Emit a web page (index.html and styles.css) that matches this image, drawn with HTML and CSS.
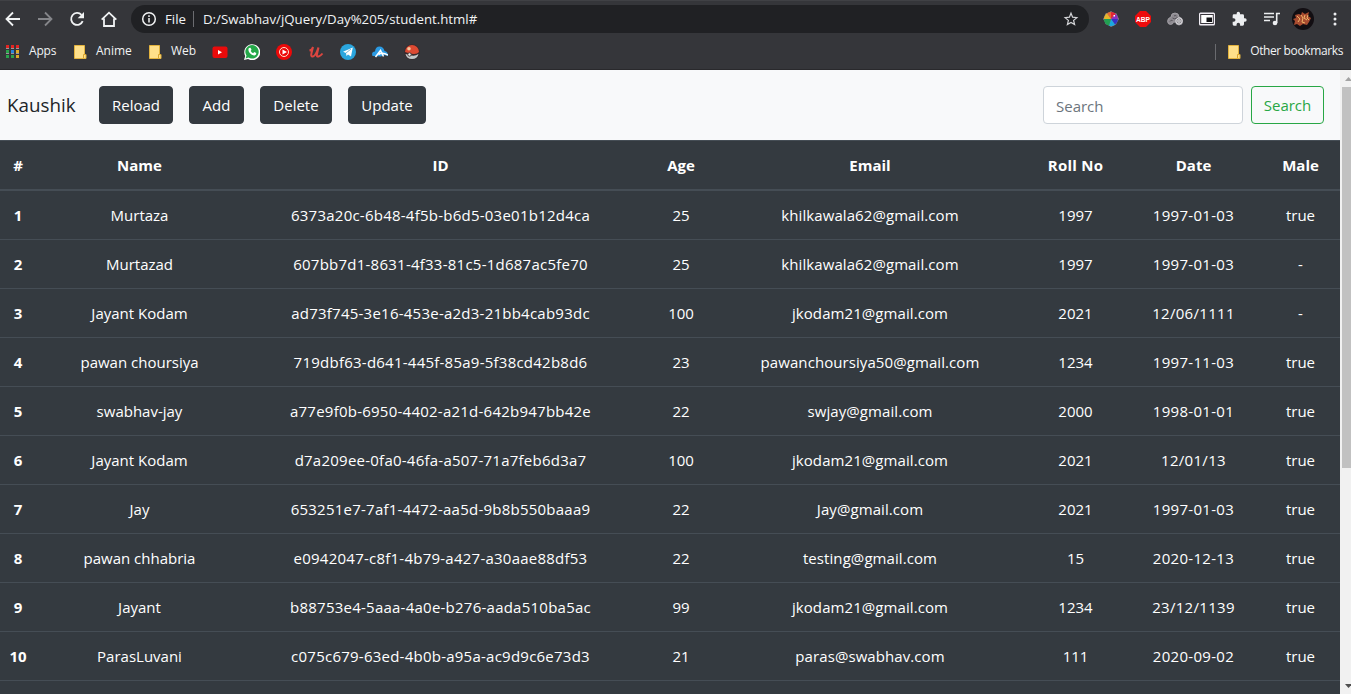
FILE: index.html
```html
<!DOCTYPE html>
<html lang="en">
<head>
<meta charset="utf-8">
<title>Students</title>
<link rel="stylesheet" href="styles.css">
</head>
<body>
<div class="chrome">
  <div class="toolbar">
    <div class="nav-icons">
      <svg width="16" height="16" viewBox="0 0 16 16" class="line"><path d="M15 8H2M8 1.500L1.500 8L8 14.500"/></svg>
      <svg width="16" height="16" viewBox="0 0 16 16" class="line dim"><path d="M1 8h13M8 1.500L14.500 8L8 14.500"/></svg>
      <svg width="16" height="16" viewBox="0 0 16 16" class="line"><path d="M13.700 10.200A6 6 0 1 1 12.500 3.800"/><path class="solid" d="M15 1v6.300H8.700z"/></svg>
      <svg width="16" height="16" viewBox="0 0 16 16" class="line"><path d="M.7 8.700L8 1.700l7.300 7M3 7.500V15h10V7.500"/></svg>
    </div>
    <div class="address">
      <svg class="info" width="16" height="16" viewBox="0 0 16 16"><circle cx="8" cy="8" r="6.300"/><path d="M8 7v4.500M8 4.300v1.600"/></svg>
      <span class="scheme">File</span>
      <span class="bar"></span>
      <span class="url">D:/Swabhav/jQuery/Day%205/student.html#</span>
      <svg class="star" width="16" height="16" viewBox="0 0 16 16"><path d="M8 2.200l1.600 4 4.300.4-3.300 2.800 1 4.200L8 11.400l-3.600 2.200 1-4.200-3.300-2.800 4.300-.4z"/></svg>
    </div>
    <div class="extensions">
      <svg width="16" height="16" viewBox="0 0 16 16"><path fill="#85838a" d="M8 0l2 1.500 3.500 1L15 6l1 2-1.500 2.500L13 13.500 10 15l-2 1-2-1.500L2.500 13 1.500 10 0 8l1.500-2.500L2.500 2.500 6 1.500z"/><path fill="#e32636" d="M8 8V1a7 7 0 0 1 5 2z"/><path fill="#8d2fc0" d="M8 8l5-5a7 7 0 0 1 2 5z"/><path fill="#3532c4" d="M8 8h7a7 7 0 0 1-3 5.700z"/><path fill="#19a9e0" d="M8 8l4 5.700a7 7 0 0 1-6 1.100z"/><path fill="#22a052" d="M8 8l-2 6.800A7 7 0 0 1 1 8z"/><path fill="#e7b52c" d="M8 8H1a7 7 0 0 1 3-5.700z"/><path fill="#e66a30" d="M8 8L4 2.300A7 7 0 0 1 8 1z"/><path fill="#fff" d="M10.500 4h1.500v1.500h-1.500z"/></svg>
      <svg class="blocker" width="16" height="16" viewBox="0 0 16 16"><path fill="#ed0c0c" d="M5 0h6l5 5v6l-5 5H5l-5-5V5z"/><text x="1" y="11" class="abp" textLength="14" lengthAdjust="spacingAndGlyphs">ABP</text></svg>
      <svg width="16" height="16" viewBox="0 0 16 16"><path fill="#8e8b91" stroke="#aaa7ad" stroke-width=".8" d="M4 6Q4 2 8 2t4 4q4 1 3.700 4.500T12 14q-3 0-3.500-3-1 .5-2 0Q6 13.500 3.500 13.500T.5 10.500Q.5 7 4 6z"/><circle cx="12" cy="10" r="3.200" fill="none" stroke="#e0dfe2"/><circle cx="12" cy="10" r="1.300" fill="none" stroke="#e0dfe2" stroke-width=".8"/><path fill="none" stroke="#56535a" d="M5.500 7q2 2 5-.5M3 10.500q1-2 2.500-1M7 5q1-1 2.500 0"/></svg>
      <svg width="16" height="16" viewBox="0 0 16 16"><rect y="1.500" width="16" height="13" rx="1.500" fill="#f2eef5"/><rect x="1.700" y="3.500" width="12.600" height="9" fill="#fff" stroke="#37343b" stroke-width="1"/><path fill="#151518" d="M7.500 6.500h5.500v4.500H7.500z"/></svg>
      <svg width="16" height="16" viewBox="0 0 24 24"><path fill="#eceef0" d="M21 11h-1.500V7a2 2 0 0 0-2-2h-4V3.500a2.500 2.500 0 0 0-5 0V5h-4a2 2 0 0 0-2 2v3.800H4a2.700 2.700 0 0 1 0 5.400H2.500V20a2 2 0 0 0 2 2h3.800v-1.500a2.700 2.700 0 0 1 5.400 0V22h3.800a2 2 0 0 0 2-2v-4H21a2.500 2.500 0 0 0 0-5z"/></svg>
      <svg width="18" height="16" viewBox="0 0 18 16"><path class="notes" d="M1 2.500h10M1 6h10M1 9.500h6M17 2.500h-3.300V12"/><circle cx="12" cy="12" r="2.300" fill="#eceef0"/></svg>
      <svg class="avatar" width="22" height="22" viewBox="0 0 22 22"><circle cx="11" cy="11" r="11" fill="#120e12"/><path fill="#a84c30" d="M3 7l4-1 2 1 1-3 3 2 4-2-1 4 3 2-2 4-2 3-4-1-3 2-3-2-3 1 1-4-2-2 3-1z"/><path fill="none" stroke="#efb568" d="M5 8l3 3-2 3M9 7l2 3-1 4 3 1M13 7l-1 3 3 2M16 7l-1 3 2 2"/></svg>
      <svg class="more" width="4" height="16" viewBox="0 0 4 16" fill="#eceef0"><circle cx="2" cy="3" r="1.500"/><circle cx="2" cy="8" r="1.500"/><circle cx="2" cy="13" r="1.500"/></svg>
    </div>
  </div>
  <div class="bookmarks">
    <svg class="apps" width="13" height="14" viewBox="0 0 13 14"><path fill="#e32422" d="M0 0h3v3H0zM5 0h3v3H5zM10 0h3v3h-3z"/><path fill="#2ba24c" d="M0 5h3v3H0zM0 10h3v3H0zM5 10h3v3H5z"/><path fill="#2684dc" d="M5 5h3v3H5z"/><path fill="#dcac28" d="M10 5h3v3h-3zM10 10h3v3h-3z"/><path fill="#999" d="M0 3h3v1H0zM5 3h3v1H5zM10 3h3v1h-3zM0 8h3v1H0zM5 8h3v1H5zM10 8h3v1h-3z"/></svg>
    <span class="label apps-label">Apps</span>
    <svg class="folder" width="13" height="14" viewBox="0 0 13 14"><path fill="#ffe08a" stroke="#e3b33e" d="M.5.5h10v9h1.500v4H.5z"/><path fill="none" stroke="#d9a52f" d="M9.500 13v-3.500H12"/></svg>
    <span class="label anime">Anime</span>
    <svg class="folder" width="13" height="14" viewBox="0 0 13 14"><path fill="#ffe08a" stroke="#e3b33e" d="M.5.5h10v9h1.500v4H.5z"/><path fill="none" stroke="#d9a52f" d="M9.500 13v-3.500H12"/></svg>
    <span class="label web">Web</span>
    <div class="sites">
      <svg width="16" height="16" viewBox="0 0 16 16"><rect x=".5" y="2.500" width="15" height="11.500" rx="2" fill="#e90b0b"/><path fill="#fff" d="M6 6l4 2.200-4 2.300z"/></svg>
      <svg width="16" height="16" viewBox="0 0 16 16"><path fill="#fff" d="M0 16l1.200-4A8 8 0 1 1 4 15z"/><path fill="#25a849" d="M1.600 14.400l.9-2.800a6.700 6.700 0 1 1 2 1.900z"/><path fill="#fff" d="M5 4l1.500-.3 1 2-.8 1.200q1 1.700 2.500 2.300l1-1.200 2 1q.3 2-1.700 2.400Q8 11.700 5.700 9 3.500 6 5 4z"/></svg>
      <svg width="16" height="16" viewBox="0 0 16 16"><circle cx="8" cy="8" r="8" fill="#ed0909"/><circle cx="8" cy="8" r="4.500" fill="none" stroke="#ffe6d0"/><path fill="#fff" d="M6.500 5.500L11 8l-4.500 2.500z"/></svg>
      <svg width="16" height="16" viewBox="0 0 16 16"><path fill="none" stroke="#dc4640" stroke-width="2" d="M1.500 6.500Q4 6 5 3L3.500 9Q2.500 13 5 12.500 7.500 12 10.500 3.500L9 10q-.7 3 1.600 2.500Q12.500 12 14.500 9.500"/></svg>
      <svg width="16" height="16" viewBox="0 0 16 16"><circle cx="8" cy="8" r="8" fill="#2ba6de"/><path fill="#fff" d="M3 7.700L12.800 3.500 11 12.500 8 10.500 6.500 12 6 9z"/><path stroke="#7ab9d5" d="M6 9l5-4"/></svg>
      <svg width="16" height="16" viewBox="0 0 16 16"><path fill="#2b9be4" d="M.5 12Q-1 8 3 7.500 3.500 2.500 7.500 2.500T12.500 7Q16 7.500 16 12L12 11 9 12.500z"/><path fill="none" stroke="#fff" stroke-width="1.500" d="M3.500 13L8.500 6.500l3 6M6.500 10.500q4-2.500 9.500.5"/></svg>
      <svg width="16" height="16" viewBox="0 0 16 16"><circle cx="8" cy="8" r="7.800" fill="#39292b"/><path fill="#dd4a32" d="M1 8a7 7 0 0 1 14 0q-2 2.500-6 2T1 8z"/><path fill="#c3c8c8" d="M1.500 10l4 1q5 2 9-1-1 5-6.500 5t-6.500-5z"/><circle cx="5" cy="4.800" r="1.800" fill="#f7c79c"/><circle cx="5.500" cy="10.500" r="1.700" fill="#eee" stroke="#4a3d3c"/></svg>
    </div>
    <div class="other">
      <svg class="folder" width="13" height="14" viewBox="0 0 13 14"><path fill="#ffe08a" stroke="#e3b33e" d="M.5.5h10v9h1.500v4H.5z"/><path fill="none" stroke="#d9a52f" d="M9.500 13v-3.500H12"/></svg>
      <span class="label">Other bookmarks</span>
    </div>
  </div>
</div>
<div class="viewport">
  <main class="page">
    <nav class="navbar">
      <span class="brand">Kaushik</span>
      <button class="btn reload">Reload</button>
      <button class="btn add">Add</button>
      <button class="btn delete">Delete</button>
      <button class="btn update">Update</button>
      <input class="search" placeholder="Search">
      <button class="btn outline">Search</button>
    </nav>
    <table class="students">
      <colgroup><col class="c-num"><col class="c-name"><col class="c-id"><col class="c-age"><col class="c-email"><col class="c-roll"><col class="c-date"><col class="c-male"></colgroup>
      <thead><tr><th>#</th><th>Name</th><th>ID</th><th>Age</th><th>Email</th><th>Roll No</th><th>Date</th><th>Male</th></tr></thead>
      <tbody>
        <tr><th>1</th><td>Murtaza</td><td>6373a20c-6b48-4f5b-b6d5-03e01b12d4ca</td><td>25</td><td>khilkawala62@gmail.com</td><td>1997</td><td>1997-01-03</td><td>true</td></tr>
        <tr><th>2</th><td>Murtazad</td><td>607bb7d1-8631-4f33-81c5-1d687ac5fe70</td><td>25</td><td>khilkawala62@gmail.com</td><td>1997</td><td>1997-01-03</td><td>-</td></tr>
        <tr><th>3</th><td>Jayant Kodam</td><td>ad73f745-3e16-453e-a2d3-21bb4cab93dc</td><td>100</td><td>jkodam21@gmail.com</td><td>2021</td><td>12/06/1111</td><td>-</td></tr>
        <tr><th>4</th><td>pawan choursiya</td><td>719dbf63-d641-445f-85a9-5f38cd42b8d6</td><td>23</td><td>pawanchoursiya50@gmail.com</td><td>1234</td><td>1997-11-03</td><td>true</td></tr>
        <tr><th>5</th><td>swabhav-jay</td><td>a77e9f0b-6950-4402-a21d-642b947bb42e</td><td>22</td><td>swjay@gmail.com</td><td>2000</td><td>1998-01-01</td><td>true</td></tr>
        <tr><th>6</th><td>Jayant Kodam</td><td>d7a209ee-0fa0-46fa-a507-71a7feb6d3a7</td><td>100</td><td>jkodam21@gmail.com</td><td>2021</td><td>12/01/13</td><td>true</td></tr>
        <tr><th>7</th><td>Jay</td><td>653251e7-7af1-4472-aa5d-9b8b550baaa9</td><td>22</td><td>Jay@gmail.com</td><td>2021</td><td>1997-01-03</td><td>true</td></tr>
        <tr><th>8</th><td>pawan chhabria</td><td>e0942047-c8f1-4b79-a427-a30aae88df53</td><td>22</td><td>testing@gmail.com</td><td>15</td><td>2020-12-13</td><td>true</td></tr>
        <tr><th>9</th><td>Jayant</td><td>b88753e4-5aaa-4a0e-b276-aada510ba5ac</td><td>99</td><td>jkodam21@gmail.com</td><td>1234</td><td>23/12/1139</td><td>true</td></tr>
        <tr><th>10</th><td>ParasLuvani</td><td>c075c679-63ed-4b0b-a95a-ac9d9c6e73d3</td><td>21</td><td>paras@swabhav.com</td><td>111</td><td>2020-09-02</td><td>true</td></tr>
      </tbody>
    </table>
  </main>
  <div class="scrollbar">
    <svg class="arrow" width="11" height="17" viewBox="0 0 11 17"><path fill="#a3a3a3" d="M5 11l3.500-4 3.500 4z"/></svg>
    <div class="thumb"></div>
    <svg class="arrow down" width="11" height="17" viewBox="0 0 11 17"><path fill="#505050" d="M5 7h7l-3.500 4z"/></svg>
  </div>
</div>
</body>
</html>
```
FILE: styles.css
```css
* { box-sizing: border-box; }
body { margin: 0; width: 1351px; height: 694px; overflow: hidden; font-family: "Open Sans", "Noto Sans", sans-serif; font-size: 15px; line-height: 24px; display: flex; flex-direction: column; }
svg { display: block; flex: none; }

/* browser chrome */
.chrome { height: 70px; flex: none; background: #35363a; border-top: 1px solid #404145; border-bottom: 1px solid #29292c; color: #f1f3f4; }
.toolbar { display: flex; align-items: center; height: 36px; }
.nav-icons { display: flex; gap: 16px; padding-left: 5px; width: 131px; }
.line { fill: none; stroke: #f1f3f4; stroke-width: 1.8; }
.line .solid { fill: #f1f3f4; stroke: none; }
.dim { stroke: #85868a; }
.address { display: flex; align-items: center; width: 958px; height: 28px; border-radius: 14px; background: #202124; padding: 0 10px; font-size: 13.25px; }
.info { fill: none; stroke: #f1f3f4; stroke-width: 1.5; }
.scheme { margin-left: 8px; width: 28px; }
.bar { width: 1px; height: 16px; background: #6b6c70; }
.url { margin-left: 9px; white-space: nowrap; }
.star { margin-left: auto; fill: none; stroke: #d4d5d8; stroke-width: 1.2; }
.extensions { display: flex; align-items: center; gap: 16px; padding-left: 14px; }
.extensions .avatar { margin-left: -5px; }
.extensions .more { margin-left: 3px; }
.blocker { overflow: visible; }
.abp { font: bold 7.5px "Liberation Sans", sans-serif; fill: #fff; }
.notes { fill: none; stroke: #eceef0; stroke-width: 1.6; }
.bookmarks { display: flex; align-items: center; height: 29px; padding-left: 6px; font-size: 12px; line-height: 22px; }
.apps { margin-right: 10px; }
.label { white-space: nowrap; padding-bottom: 2px; }
.folder { margin-right: 9px; }
.apps-label { width: 45px; letter-spacing: -.2px; }
.anime { width: 53px; }
.web { width: 41px; }
.sites { display: flex; gap: 16px; }
.other { display: flex; align-items: center; margin-left: auto; height: 16px; border-left: 1px solid #6a6b6f; padding: 0 8px 0 12px; letter-spacing: -.38px; }

/* page */
.viewport { display: flex; flex: 1; min-height: 0; }
.page { width: 1340px; overflow: hidden; background: #343a40; }
.navbar { display: flex; align-items: center; height: 70px; background: #f8f9fa; padding: 0 16px 0 7px; }
.brand { width: 92px; font-size: 18.8px; line-height: 30px; color: #212529; font-weight: 400; }
.btn { height: 38px; margin: 0 16px 0 0; padding: 0; border: 1px solid #343a40; border-radius: 4px; background: #343a40; color: #fff; font: inherit; }
.reload { width: 74px; }
.add { width: 55px; }
.delete { width: 72px; }
.update { width: 78px; }
.search { width: 200px; height: 38px; margin: 0 8px 0 auto; padding: 3px 12px 1px; border: 1px solid #ced4da; border-radius: 4px; background: #fff; font: inherit; }
.search::placeholder { color: #6c757d; opacity: 1; }
.outline { width: 73px; margin: 0; background: transparent; border-color: #28a745; color: #28a745; }
.students { width: 1340px; table-layout: fixed; border-collapse: separate; border-spacing: 0; color: #fff; background: #343a40; text-align: center; }
.students th, .students td { height: 49px; padding: 0; border-bottom: 1px solid #454d55; white-space: nowrap; }
.students thead th { height: 51px; border-top: 1px solid #454d55; border-bottom: 2px solid #454d55; }
.students tr > :first-child { padding-right: 9px; }
.students td:nth-child(3) { letter-spacing: .24px; }
.students td:nth-child(5) { letter-spacing: .08px; }
.students td:nth-child(7) { letter-spacing: .3px; }
.students th:nth-child(6) { letter-spacing: .25px; }
.c-num { width: 45px; }
.c-name { width: 189px; }
.c-id { width: 413px; }
.c-age { width: 68px; }
.c-email { width: 310px; }
.c-roll { width: 101px; }
.c-date { width: 135px; }
.c-male { width: 79px; }
.scrollbar { width: 11px; display: flex; flex-direction: column; background: #f1f1f1; }
.thumb { height: 381px; margin-left: 2px; background: #c1c1c1; }
.down { margin-top: auto; }
```
